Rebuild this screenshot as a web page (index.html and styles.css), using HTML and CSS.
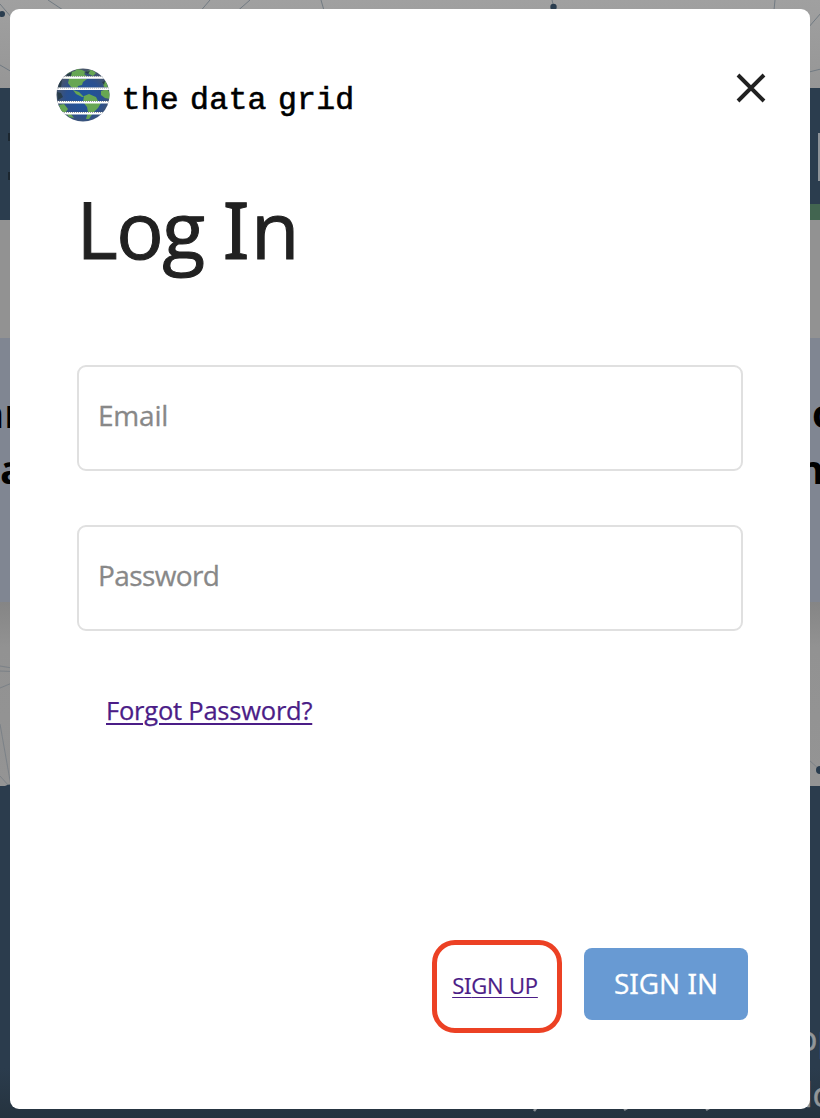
FILE: index.html
```html
<!DOCTYPE html>
<html lang="en">
<head>
<meta charset="utf-8">
<title>the data grid – Log In</title>
<link rel="stylesheet" href="styles.css">
</head>
<body>
<div class="page" aria-hidden="true">
  <div class="band top"></div>
  <div class="band nav"><span class="nav-field"></span><span class="nav-accent"></span></div>
  <div class="band gap"></div>
  <div class="band hero">
    <div class="hero-line"><span class="h-left">ar</span><span class="h-right">o</span></div>
    <div class="hero-line"><span class="h-left second">a</span><span class="h-right second">n</span></div>
  </div>
  <div class="band mid"></div>
  <div class="band foot">
    <div class="foot-line"><span>op</span></div>
    <div class="foot-line low"><span>lo</span></div>
  </div>
  <svg class="network" width="820" height="1118" viewBox="0 0 820 1118" fill="none">
    <g stroke="#717a82" stroke-width="1">
      <path d="M0 4L12 18M0 65L12 72M48 0L69 14M210 0L198 14M250 0L234 14M321 0L325 14M552 0L554 8M775 0L774 10M808 28L821 13M809 72L821 69"/>
      <path d="M0 671L12 671.500M0 688L12 683M0 666L12 668M0 724L11 786M0 776L9 786M809 760L820 770" stroke-width=".7"/>
    </g>
    <g fill="#2a3d4f"><circle cx="2" cy="14" r="3"/><circle cx="553.500" cy="7" r="3.200"/><circle cx="820" cy="770" r="4"/><path d="M5 786Q10 783 12 786Z"/></g>
    <g fill="#1c2730"><rect x="8" y="133" width="3" height="8"/><rect x="8" y="172" width="3" height="8"/></g>
    <g stroke="#8a9095" stroke-width="2.500"><path d="M537 1107L534 1111M629 1107L624 1110M711 1107L706 1110"/></g>
  </svg>
</div>

<main class="dialog" role="dialog" aria-labelledby="title">
  <header class="head">
    <div class="brand">
      <svg class="globe" width="54" height="54" viewBox="0 0 54 54">
        <defs>
          <radialGradient id="sea" cx=".52" cy=".55" r=".55"><stop offset="0" stop-color="#1c559f"/><stop offset=".6" stop-color="#2a508f"/><stop offset="1" stop-color="#4b5666"/></radialGradient>
          <clipPath id="disc"><circle cx="27" cy="27" r="26.500"/></clipPath>
        </defs>
        <g clip-path="url(#disc)">
          <rect width="54" height="54" fill="url(#sea)"/>
          <g fill="#67a653">
            <path d="M9 10L12 5L19 3L21 1L26 2L30 4L28 6L32 9L28 10L26 8L24 11L12 11Z"/>
            <path d="M13 11L31 11L27 14L26 17L22 18L21 21L18 20L15 19L12 15Z"/>
            <path d="M31 3L36 2L40 5L37 8L33 6Z"/>
            <path d="M17 22L23 24L28 29L26 29L20 26Z"/>
            <path d="M28 28L33 26L40 29L42 33L45 35L42 40L38 44L35 48L33 51L30 51L32 44L31 39L27 34Z"/>
            <path d="M45 23L51 21L54 25L54 31L49 30L45 27ZM47 15L50 13L52 20L48 19Z"/>
            <path d="M3 37L8 36L12 41L9 45L5 43ZM10 45L15 46L18 50L13 49Z"/>
          </g>
          <g fill="#293d4b"><path d="M11 6L16 4L15 8L10 10ZM3 14L6 12L5 19L2 20ZM1 24L5 25L7 29L2 32ZM28 4L34 3L32 6ZM46 14L49 13L48 17Z"/></g>
          <g stroke="#fff" stroke-width="2.600"><path d="M6 9.500H49M1 20.800H54M0 34.300H54M7 45.300H48"/></g>
          <g stroke="#9a9ea2" stroke-width="1.100" stroke-dasharray="1 1"><path d="M6 8.500H48M2 20H52M1 33.500H53M8 44.500H47"/></g>
        </g>
      </svg>
      <span class="brand-name">the data grid</span>
    </div>
    <button class="close" aria-label="Close"><svg width="30" height="30" viewBox="0 0 30 30"><path d="M2 2L28 28M28 2L2 28" stroke="#212121" stroke-width="3.900"/></svg></button>
  </header>
  <h1 class="title" id="title">Log <span class="slab">I</span>n</h1>
  <form class="form">
    <label class="field"><span class="email">Email</span></label>
    <label class="field"><span class="password">Password</span></label>
    <a class="forgot" href="#">Forgot Password?</a>
    <div class="actions">
      <div class="callout"><a class="signup" href="#">S<span class="slab">I</span>GN UP</a></div>
      <button class="signin" type="button">S<span class="slab">I</span>GN <span class="slab">I</span>N</button>
    </div>
  </form>
</main>
</body>
</html>
```
FILE: styles.css
```css
* { box-sizing: border-box; }
html, body { margin: 0; height: 1118px; overflow: hidden; }
body { position: relative; font-family: "Open Sans", "Noto Sans", sans-serif; color: #212121; }
.page { width: 820px; height: 1118px; overflow: hidden; }
.band { overflow: hidden; }
.top { height: 88px; background: linear-gradient(#a0a0a0, #969696); }
.nav { height: 132px; background: #2b3d4e; display: flex; flex-direction: column; align-items: flex-end; justify-content: space-between; }
.nav-field { width: 2px; height: 48px; margin-top: 45px; background: #8f9499; }
.nav-accent { width: 12px; height: 16px; background: #426550; }
.gap { height: 118px; background: #929292; }
.hero { height: 264px; background: #808692; padding-top: 47px; }
.hero-line { height: 56px; display: flex; justify-content: space-between; font: 700 40px/56px "Open Sans", sans-serif; color: #000; }
.h-left { margin-left: -20px; }
.h-left.second { margin-left: 0; }
.h-right { width: 8px; }
.h-right.second { width: 22px; }
.mid { height: 184px; background: linear-gradient(#858585, #929292 45px, #949494); }
.foot { height: 332px; background: linear-gradient(#2b3c4d 85%, #25333f); padding-top: 224px; }
.foot-line { height: 56px; display: flex; justify-content: flex-end; font-size: 34px; line-height: 56px; color: #92969a; -webkit-text-stroke: .5px #92969a; }
.foot-line span { width: 23px; }
.foot-line.low span { width: 16px; }
.network { position: absolute; left: 0; top: 0; }

.dialog { position: absolute; left: 10px; top: 9px; width: 800px; height: 1100px; background: #fff; border-radius: 9px; padding: 59px 44px 0 46px; }
.head { display: flex; justify-content: space-between; height: 56px; }
.brand { display: flex; align-items: flex-start; gap: 12px; }
.globe { display: block; margin-left: -.5px; }
.brand-name { font: 400 31.500px/56px "Liberation Mono", monospace; color: #000; white-space: pre; padding-top: 4.500px; letter-spacing: .25px; word-spacing: -8px; -webkit-text-stroke: .6px #000; }
.close { border: 0; padding: 0; background: none; width: 30px; height: 30px; margin-top: 5px; }
.close svg { display: block; }
.title { margin: 50px 0 0 20.500px; font-weight: 400; font-size: 79px; line-height: 110px; height: 110px; letter-spacing: -1.500px; white-space: nowrap; -webkit-text-stroke: 1px #212121; }
.title .slab { margin-right: 3px; }
.slab { font-family: "Noto Sans", sans-serif; }
.form { display: flex; flex-direction: column; padding: 81px 23px 0 21px; }
.field { height: 106px; border: 2px solid #e0e0e0; border-radius: 9px; margin-bottom: 54px; padding: 0 19px; font-size: 28px; line-height: 97px; color: #888; -webkit-text-stroke: .3px #888; }
.email { letter-spacing: -.2px; }
.password { letter-spacing: -.6px; }
.forgot { align-self: flex-start; margin: 0 0 0 29px; height: 48px; line-height: 51px; font-size: 25.500px; letter-spacing: -.22px; color: #4b1d87; -webkit-text-stroke: .25px #4b1d87; text-decoration-thickness: 2px; text-underline-offset: 3px; white-space: nowrap; }
.actions { display: flex; justify-content: flex-end; align-items: flex-start; gap: 22px; margin: 207px -5px 0 0; }
.callout { width: 130px; height: 93px; border: 5px solid #ec4124; border-radius: 23px; display: flex; justify-content: center; align-items: center; padding: 0 4px 3px 0; }
.signup { color: #4b1d87; font-size: 22px; letter-spacing: -.2px; -webkit-text-stroke: .2px #4b1d87; text-decoration-thickness: 1px; text-underline-offset: 3px; white-space: nowrap; }
.signin { width: 164px; height: 72px; margin-top: 8px; border: 0; border-radius: 8px; background: #689ad3; color: #fff; font: 400 28px/70px "Open Sans", sans-serif; padding: 0 0 2px; white-space: nowrap; letter-spacing: 0; -webkit-text-stroke: .3px #fff; }
```
